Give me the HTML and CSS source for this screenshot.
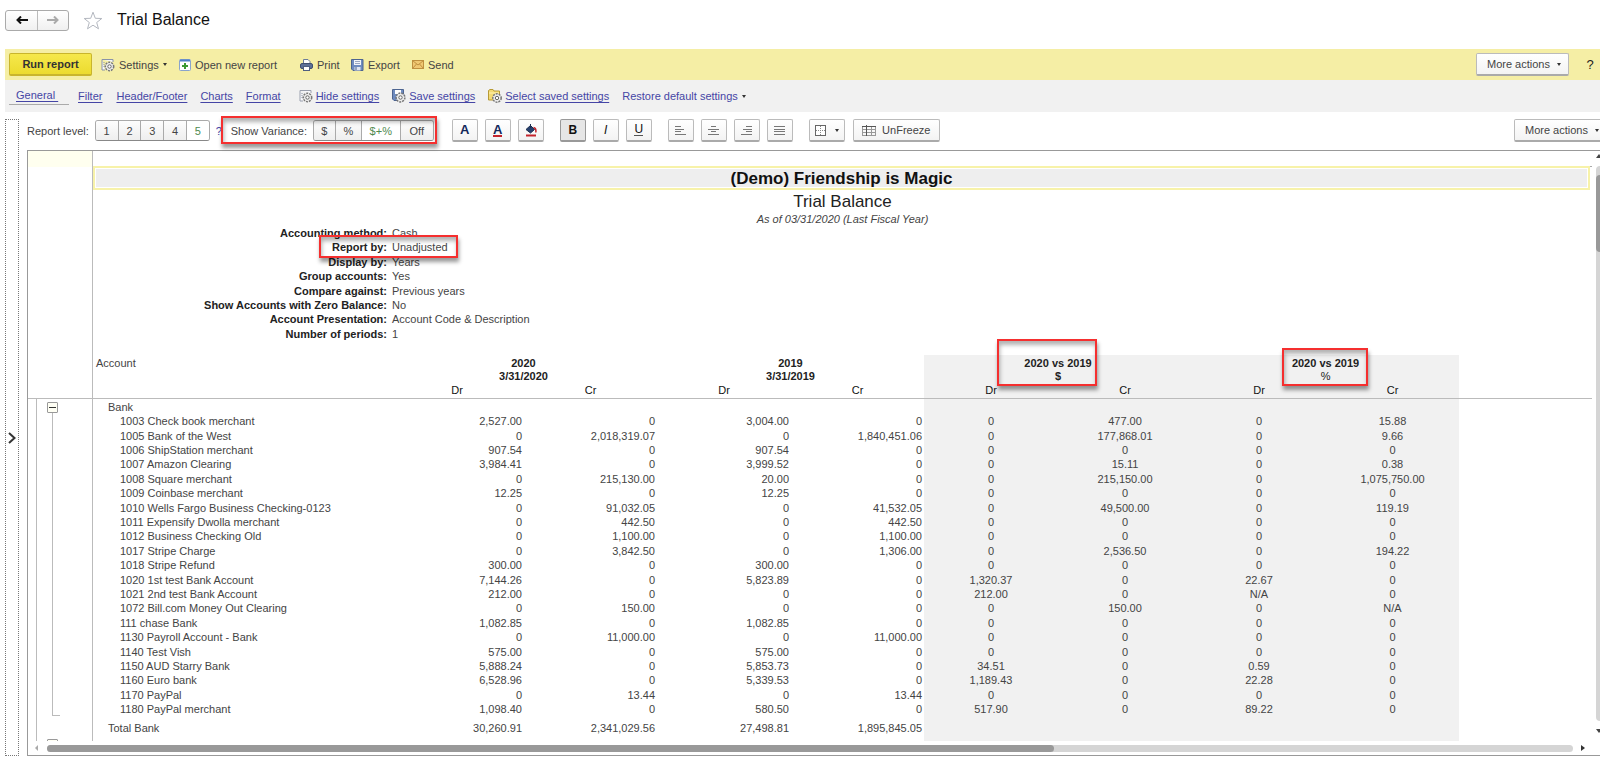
FILE: index.html
```html
<!DOCTYPE html>
<html lang="en">
<head>
<meta charset="utf-8">
<title>Trial Balance</title>
<link rel="stylesheet" href="styles.css">
</head>
<body>
<div class="app">
  <header class="titlebar">
    <div class="nav-group">
      <button class="nav-btn" aria-label="Back"><svg width="12" height="8" viewBox="0 0 12 8"><path d="M5 0.5 1.5 4 5 7.5M1.5 4H12" fill="none" stroke="#111" stroke-width="2"/></svg></button>
      <button class="nav-btn" aria-label="Forward"><svg width="12" height="8" viewBox="0 0 12 8"><path d="M7 0.5 10.500 4 7 7.5M10.500 4H0" fill="none" stroke="#aaa" stroke-width="2"/></svg></button>
    </div>
    <svg class="star" width="20" height="19" viewBox="0 0 20 19"><path d="M10 1.200 12.300 7.300 18.800 7.500 13.700 11.500 15.500 17.800 10 14.200 4.500 17.800 6.300 11.500 1.200 7.500 7.700 7.300Z" fill="#fff" stroke="#b4b8c0" stroke-width="1"/></svg>
    <h1 class="page-title">Trial Balance</h1>
  </header>

  <div class="command-bar">
    <button class="btn run-btn">Run report</button>
    <button class="cmd settings-cmd"><svg width="14" height="14" viewBox="0 0 14 14"><path d="M1 1.500H12V4M1 1.500V12H4" fill="#f4f6fb" stroke="#8a93a8"/><path d="M3 4V10" stroke="#8a93a8" stroke-dasharray="1 1"/><circle cx="8.500" cy="8.500" r="4.200" fill="#eee" stroke="#777" stroke-width="1.500" stroke-dasharray="2 1"/><circle cx="8.500" cy="8.500" r="1.700" fill="#fff" stroke="#666"/></svg>Settings<i class="caret"></i></button>
    <button class="cmd open-cmd"><svg width="13" height="12" viewBox="0 0 13 12"><rect x=".5" y=".5" width="11" height="11" rx="1" fill="#fff" stroke="#8aa4cc"/><path d="M1 1.500H11" stroke="#4f7fc7" stroke-width="2"/><path d="M6 4V10M3 7H9" stroke="#3c9a32" stroke-width="2"/></svg>Open new report</button>
    <button class="cmd print-cmd"><svg width="13" height="12" viewBox="0 0 13 12"><path d="M3.500 5V.5H8L10 2.500V5" fill="#fff" stroke="#6d7c98"/><rect x=".5" y="4.500" width="12" height="5" rx="1.500" fill="#5d7096" stroke="#3f4f70"/><rect x="3.500" y="7.500" width="6" height="4" fill="#fff" stroke="#4f5f80"/></svg>Print</button>
    <button class="cmd export-cmd"><svg width="13" height="12" viewBox="0 0 13 12"><path d="M.5 .5H12V11.500H2L.5 10Z" fill="#6f8cc0" stroke="#4d6490"/><rect x="3" y="1" width="7" height="5" fill="#f3f5fa"/><path d="M4 2.500H9M4 4.500H9" stroke="#9aa8c4"/><rect x="3.500" y="8" width="6" height="3.500" fill="#dfe5f0"/><path d="M5 8V11" stroke="#4d6490"/></svg>Export</button>
    <button class="cmd send-cmd"><svg width="12" height="9" viewBox="0 0 12 9"><rect x=".5" y=".5" width="11" height="8" fill="#f0c873" stroke="#bf9040"/><path d="M.5 .5 6 5 11.500 .5M.5 8.500 4.500 4M11.500 8.500 7.500 4" fill="none" stroke="#bf9040"/></svg>Send</button>
    <div class="spacer"></div>
    <button class="btn more-btn">More actions<i class="caret"></i></button>
    <button class="cmd help-cmd">?</button>
  </div>

  <nav class="tabs">
    <a class="tab active" href="#">General&nbsp;</a>
    <a class="tab filter-tab" href="#">Filter</a>
    <a class="tab header-tab" href="#">Header/Footer</a>
    <a class="tab" href="#">Charts</a>
    <a class="tab format-tab" href="#">Format</a>
    <a class="tab with-icon" href="#"><svg width="14" height="14" viewBox="0 0 14 14"><path d="M1 1.500H12V4M1 1.500V12H4" fill="#f8f8fb" stroke="#9aa0ae"/><path d="M3 4V10" stroke="#8a93a8" stroke-dasharray="1 1"/><circle cx="8.500" cy="8.500" r="4.200" fill="#eee" stroke="#777" stroke-width="1.500" stroke-dasharray="2 1"/><circle cx="8.500" cy="8.500" r="1.700" fill="#fff" stroke="#666"/></svg><span>Hide settings</span></a>
    <a class="tab with-icon" href="#"><svg width="14" height="14" viewBox="0 0 14 14"><path d="M.5 .5H11.500V11.500H2L.5 10Z" fill="#6f8cc0" stroke="#4d6490"/><rect x="3" y="1" width="6" height="4" fill="#fff"/><circle cx="8.500" cy="8.500" r="4.400" fill="#eee" stroke="#777" stroke-width="1.500" stroke-dasharray="2 1"/><circle cx="8.500" cy="8.500" r="1.700" fill="#fff" stroke="#666"/></svg><span>Save settings</span></a>
    <a class="tab with-icon" href="#"><svg width="14" height="14" viewBox="0 0 14 14"><path d="M.5 11V1.500L2 .5H5L6 2H11.500V11Z" fill="#f3da74" stroke="#b79a35"/><path d="M1 4H11" stroke="#fff3b5"/><circle cx="9" cy="9" r="4.200" fill="#eee" stroke="#777" stroke-width="1.500" stroke-dasharray="2 1"/><circle cx="9" cy="9" r="1.700" fill="#fff" stroke="#666"/></svg><span>Select saved settings</span></a>
    <a class="tab restore-tab" href="#">Restore default settings<i class="caret"></i></a>
  </nav>

  <div class="workspace">
    <button class="side-panel" aria-label="Expand panel"><svg width="8" height="12" viewBox="0 0 8 12"><path d="M1 1 6.500 6 1 11" fill="none" stroke="#333" stroke-width="2"/></svg></button>
    <div class="report">
      <div class="toolbar">
        <span class="tool-label">Report level:</span>
        <div class="segmented levels">
          <button>1</button><button>2</button><button>3</button><button>4</button><button class="on">5</button>
        </div>
        <a class="level-help" href="#">?</a>
        <div class="variance">
          <span class="tool-label">Show Variance:</span>
          <div class="segmented amounts">
            <button>$</button><button>%</button><button class="on">$+%</button><button>Off</button>
          </div>
          <span class="mark variance-mark"></span>
        </div>
        <div class="tool-group">
          <button class="btn tool" aria-label="Font"><b class="navy">A</b></button>
          <button class="btn tool" aria-label="Text color"><b class="navy redline">A</b></button>
          <button class="btn tool" aria-label="Fill color"><svg width="12" height="13" viewBox="0 0 12 13"><path d="M1 5.500 5.500 1.500 9.500 5.500 5.500 9Z" fill="#26406e" stroke="#1b2d50"/><path d="M5.500 4V0" stroke="#1b2d50"/><path d="M8.500 3.500Q11.500 4 10.800 8.500" fill="none" stroke="#c3242c" stroke-width="1.500"/><path d="M1 11.500H11" stroke="#c3242c" stroke-width="2"/></svg></button>
        </div>
        <div class="tool-group">
          <button class="btn tool pressed" aria-label="Bold"><b>B</b></button>
          <button class="btn tool" aria-label="Italic"><em>I</em></button>
          <button class="btn tool" aria-label="Underline"><span class="under">U</span></button>
        </div>
        <div class="tool-group">
          <button class="btn tool" aria-label="Align left"><svg width="11" height="9" viewBox="0 0 11 9"><path d="M0 .5H6M0 3.500H9M0 5.500H6M0 8.500H11" stroke="#777"/></svg></button>
          <button class="btn tool" aria-label="Align center"><svg width="11" height="9" viewBox="0 0 11 9"><path d="M3 .5H8M0 3.500H11M3 5.500H8M0 8.500H11" stroke="#777"/></svg></button>
          <button class="btn tool" aria-label="Align right"><svg width="11" height="9" viewBox="0 0 11 9"><path d="M5 .5H11M2 3.500H11M5 5.500H11M0 8.500H11" stroke="#777"/></svg></button>
          <button class="btn tool" aria-label="Justify"><svg width="11" height="9" viewBox="0 0 11 9"><path d="M0 .5H11M0 3.500H11M0 5.500H11M0 8.500H11" stroke="#777"/></svg></button>
        </div>
        <button class="btn borders" aria-label="Borders"><svg width="11" height="11" viewBox="0 0 11 11"><rect x=".5" y=".5" width="10" height="10" fill="#fff" stroke="#666"/><path d="M5.500 1V10M1 5.500H10" stroke="#888" stroke-dasharray="1 1"/></svg><i class="caret"></i></button>
        <button class="btn unfreeze"><svg width="14" height="11" viewBox="0 0 14 11"><path d="M0 1.500H14M0 4.500H14M0 7.500H14M0 10.500H14M.5 1V11M4.500 1V11M9.500 1V11M13.500 1V11" stroke="#999"/><path d="M0 1.500H14M4.500 0V11" stroke="#555"/></svg>UnFreeze</button>
        <div class="spacer"></div>
        <button class="btn more-btn clipped">More actions<i class="caret"></i></button>
      </div>

      <div class="sheet">
        <div class="gutter">
          <div class="gutter-corner"></div>
          <div class="gutter-head"></div>
          <div class="gutter-body">
            <div class="tree">
              <button class="fold" aria-label="Collapse Bank"></button>
              <div class="tree-line"></div>
              <button class="fold next" aria-label="Collapse next group"></button>
            </div>
          </div>
        </div>
        <div class="cells">
          <div class="top-row"></div>
          <h2 class="company">(Demo) Friendship is Magic</h2>
          <p class="report-name">Trial Balance</p>
          <p class="as-of">As of 03/31/2020 (Last Fiscal Year)</p>
          <dl class="params">
            <dt>Accounting method:</dt><dd>Cash</dd>
            <dt>Report by:</dt><dd class="marked">Unadjusted<span class="mark unadjusted-mark"></span></dd>
            <dt>Display by:</dt><dd>Years</dd>
            <dt>Group accounts:</dt><dd>Yes</dd>
            <dt>Compare against:</dt><dd>Previous years</dd>
            <dt>Show Accounts with Zero Balance:</dt><dd>No</dd>
            <dt>Account Presentation:</dt><dd>Account Code &amp; Description</dd>
            <dt>Number of periods:</dt><dd>1</dd>
          </dl>
          <table class="balances">
            <colgroup><col class="c-account"><col class="c-wide"><col class="c-narrow"><col class="c-wide"><col class="c-narrow"><col span="3" class="c-wide shade"><col class="c-narrow shade"><col></colgroup>
            <thead>
              <tr class="periods"><th class="account">Account</th><th colspan="2">2020<br>3/31/2020</th><th colspan="2">2019<br>3/31/2019</th><th colspan="2"><div class="marked">2020 vs 2019<br>$<span class="mark dollar-mark"></span></div></th><th colspan="2"><div class="marked">2020 vs 2019<br><span class="light">%</span><span class="mark percent-mark"></span></div></th><th></th></tr>
              <tr class="sides"><th></th><th>Dr</th><th>Cr</th><th>Dr</th><th>Cr</th><th>Dr</th><th>Cr</th><th>Dr</th><th>Cr</th><th></th></tr>
            </thead>
            <tbody>
              <tr class="group"><td>Bank</td><td></td><td></td><td></td><td></td><td></td><td></td><td></td><td></td></tr>
              <tr><td>1003 Check book merchant</td><td>2,527.00</td><td>0</td><td>3,004.00</td><td>0</td><td>0</td><td>477.00</td><td>0</td><td>15.88</td></tr>
              <tr><td>1005 Bank of the West</td><td>0</td><td>2,018,319.07</td><td>0</td><td>1,840,451.06</td><td>0</td><td>177,868.01</td><td>0</td><td>9.66</td></tr>
              <tr><td>1006 ShipStation merchant</td><td>907.54</td><td>0</td><td>907.54</td><td>0</td><td>0</td><td>0</td><td>0</td><td>0</td></tr>
              <tr><td>1007 Amazon Clearing</td><td>3,984.41</td><td>0</td><td>3,999.52</td><td>0</td><td>0</td><td>15.11</td><td>0</td><td>0.38</td></tr>
              <tr><td>1008 Square merchant</td><td>0</td><td>215,130.00</td><td>20.00</td><td>0</td><td>0</td><td>215,150.00</td><td>0</td><td>1,075,750.00</td></tr>
              <tr><td>1009 Coinbase merchant</td><td>12.25</td><td>0</td><td>12.25</td><td>0</td><td>0</td><td>0</td><td>0</td><td>0</td></tr>
              <tr><td>1010 Wells Fargo Business Checking-0123</td><td>0</td><td>91,032.05</td><td>0</td><td>41,532.05</td><td>0</td><td>49,500.00</td><td>0</td><td>119.19</td></tr>
              <tr><td>1011 Expensify Dwolla merchant</td><td>0</td><td>442.50</td><td>0</td><td>442.50</td><td>0</td><td>0</td><td>0</td><td>0</td></tr>
              <tr><td>1012 Business Checking Old</td><td>0</td><td>1,100.00</td><td>0</td><td>1,100.00</td><td>0</td><td>0</td><td>0</td><td>0</td></tr>
              <tr><td>1017 Stripe Charge</td><td>0</td><td>3,842.50</td><td>0</td><td>1,306.00</td><td>0</td><td>2,536.50</td><td>0</td><td>194.22</td></tr>
              <tr><td>1018 Stripe Refund</td><td>300.00</td><td>0</td><td>300.00</td><td>0</td><td>0</td><td>0</td><td>0</td><td>0</td></tr>
              <tr><td>1020 1st test Bank Account</td><td>7,144.26</td><td>0</td><td>5,823.89</td><td>0</td><td>1,320.37</td><td>0</td><td>22.67</td><td>0</td></tr>
              <tr><td>1021 2nd test Bank Account</td><td>212.00</td><td>0</td><td>0</td><td>0</td><td>212.00</td><td>0</td><td>N/A</td><td>0</td></tr>
              <tr><td>1072 Bill.com Money Out Clearing</td><td>0</td><td>150.00</td><td>0</td><td>0</td><td>0</td><td>150.00</td><td>0</td><td>N/A</td></tr>
              <tr><td>111 chase Bank</td><td>1,082.85</td><td>0</td><td>1,082.85</td><td>0</td><td>0</td><td>0</td><td>0</td><td>0</td></tr>
              <tr><td>1130 Payroll Account - Bank</td><td>0</td><td>11,000.00</td><td>0</td><td>11,000.00</td><td>0</td><td>0</td><td>0</td><td>0</td></tr>
              <tr><td>1140 Test Vish</td><td>575.00</td><td>0</td><td>575.00</td><td>0</td><td>0</td><td>0</td><td>0</td><td>0</td></tr>
              <tr><td>1150 AUD Starry Bank</td><td>5,888.24</td><td>0</td><td>5,853.73</td><td>0</td><td>34.51</td><td>0</td><td>0.59</td><td>0</td></tr>
              <tr><td>1160 Euro bank</td><td>6,528.96</td><td>0</td><td>5,339.53</td><td>0</td><td>1,189.43</td><td>0</td><td>22.28</td><td>0</td></tr>
              <tr><td>1170 PayPal</td><td>0</td><td>13.44</td><td>0</td><td>13.44</td><td>0</td><td>0</td><td>0</td><td>0</td></tr>
              <tr><td>1180 PayPal merchant</td><td>1,098.40</td><td>0</td><td>580.50</td><td>0</td><td>517.90</td><td>0</td><td>89.22</td><td>0</td></tr>
              <tr class="total"><td>Total Bank</td><td>30,260.91</td><td>2,341,029.56</td><td>27,498.81</td><td>1,895,845.05</td><td></td><td></td><td></td><td></td></tr>
            </tbody>
          </table>
        </div>
        <div class="vscroll">
          <i class="arrow up"></i>
          <div class="vtrack"><div class="vthumb"></div></div>
          <i class="arrow down"></i>
        </div>
        <div class="hscroll">
          <i class="arrow left"></i>
          <div class="htrack"><div class="hthumb"></div></div>
          <i class="arrow right"></i>
        </div>
      </div>
    </div>
  </div>
</div>
</body>
</html>
```
FILE: styles.css
```css
* { box-sizing: border-box; }
body {
  margin: 0;
  background: #fff;
  color: #444;
  font: 11px/14px "Liberation Sans", Arial, sans-serif;
  overflow: hidden;
}
button {
  font: inherit;
  color: inherit;
  padding: 0;
  margin: 0;
  border: 0;
  background: none;
}
h1, h2, p, dl, dd { margin: 0; }
svg { display: block; flex: none; }
.app {
  display: flex;
  flex-direction: column;
  height: 100vh;
  padding-left: 5px;
}
.spacer { flex: 1; }
.caret {
  width: 0;
  border: 2px solid transparent;
  border-top: 3px solid #333;
  border-bottom: 0;
}

/* Title bar */
.titlebar {
  display: flex;
  align-items: center;
  height: 49px;
  padding-bottom: 9px;
}
.nav-group {
  display: flex;
  height: 21px;
  border: 1px solid #aaa;
  border-radius: 3px;
  background: linear-gradient(#fff, #f0f0f0);
}
.nav-btn {
  display: flex;
  align-items: center;
  justify-content: center;
  width: 31px;
}
.nav-btn + .nav-btn { border-left: 1px solid #bbb; }
.star { margin: 0 14px 0 14px; }
.page-title {
  font-size: 16px;
  line-height: 20px;
  font-weight: normal;
  color: #111;
}

/* Command bar */
.btn {
  display: flex;
  align-items: center;
  justify-content: center;
  height: 23px;
  border: 1px solid #bbb;
  border-bottom: 2px solid #aaa;
  border-radius: 2px;
  background: linear-gradient(#fff, #f3f3f3);
}
.command-bar {
  display: flex;
  align-items: center;
  height: 31px;
  flex: none;
  padding-left: 4px;
  background: #f5eea5;
}
.run-btn {
  width: 83px;
  margin-right: 9px;
  border-color: #c9b52c;
  background: linear-gradient(#f6e84c, #ecdb2e);
  font-weight: bold;
  color: #333;
}
.cmd { display: flex; align-items: center; gap: 4px; }
.settings-cmd { width: 78px; }
.open-cmd { width: 121px; gap: 3px; }
.print-cmd { width: 51px; }
.export-cmd { width: 61px; }
.more-btn { gap: 7px; width: 93px; padding-left: 3px; }
.help-cmd {
  justify-content: center;
  width: 31px;
  padding-left: 11px;
  font-size: 13px;
  color: #222;
}

/* Settings tabs */
.tabs {
  display: flex;
  align-items: center;
  height: 32px;
  flex: none;
  padding-left: 4px;
  gap: 13px;
  background: #f1f1f1;
}
.tab { color: #4545a5; text-decoration: underline; text-underline-offset: 2px; }
.tab.active {
  width: 60px;
  margin-right: -4px;
  padding: 0 0 2px 7px;
  border-bottom: 1px solid #aaa;
}
.header-tab { margin-left: 1px; }
.format-tab { margin-right: 5px; }
.with-icon { display: flex; align-items: center; gap: 3px; text-decoration: none; }
.with-icon span { text-decoration: underline; }
.restore-tab { display: flex; align-items: center; gap: 4px; text-decoration: none; }

/* Workspace */
.workspace { display: flex; flex: 1; min-height: 0; }
.side-panel {
  display: flex;
  align-items: center;
  justify-content: center;
  width: 14px;
  flex: none;
  margin: 7px 8px 2px 0;
  border: 1px dotted #777;
}
.report { display: flex; flex-direction: column; flex: 1; min-width: 0; }
.toolbar {
  display: flex;
  align-items: center;
  height: 38px;
  flex: none;
  padding-bottom: 1px;
}
.tool-label { flex: none; }
.segmented {
  display: flex;
  height: 21px;
  border: 1px solid #aaa;
  border-bottom-color: #888;
  border-radius: 3px;
  overflow: hidden;
}
.segmented button {
  flex: 1 1 auto;
  background: linear-gradient(#fdfdfd, #eee);
}
.segmented button + button { border-left: 1px solid #aaa; }
.segmented .on { background: #fff; color: #4f8a4f; }
.levels { width: 115px; margin-left: 6px; }
.level-help { width: 16px; padding-left: 6px; color: #4545a5; text-decoration: none; }
.variance {
  position: relative;
  display: flex;
  align-items: center;
  justify-content: space-between;
  width: 203px;
  margin: 0 18px 0 5px;
}
.segmented.amounts { display: grid; grid-template-columns: 21fr 26fr 39fr 33fr; width: 121px; }
.tool-group { display: flex; gap: 7px; margin-right: 16px; }
.tool { width: 26px; color: #111; font-size: 12px; }
.pressed { background: #e6e6e6; border-color: #999; }
.navy { color: #14285a; font-size: 13px; }
.redline { line-height: 11px; border-bottom: 2px solid #c3242c; }
.under { line-height: 11px; border-bottom: 1px solid #555; }
.borders { width: 36px; gap: 9px; margin-right: 8px; }
.unfreeze { width: 87px; gap: 6px; }
.clipped { flex: none; margin-right: -7px; }

/* Red callout frames */
.marked { position: relative; }
.mark {
  position: absolute;
  border: 2px solid #f52f2f;
  box-shadow: 1px 4px 4px rgba(0, 0, 0, .4), inset 1px 4px 4px rgba(0, 0, 0, .3);
  pointer-events: none;
}
.variance-mark { inset: -4px -3px -3px -10px; }
.unadjusted-mark { top: -5px; left: -73px; width: 139px; height: 23px; }
.dollar-mark { top: -18px; left: 73px; width: 100px; height: 47px; }
.percent-mark { top: -9px; left: 90px; width: 86px; height: 38px; }

/* Sheet */
.sheet {
  flex: 1;
  min-height: 0;
  display: grid;
  grid-template-columns: 65px minmax(0, 1fr) 8px;
  grid-template-rows: minmax(0, 1fr) 14px;
  margin-bottom: 2px;
  border: 1px solid #999;
  border-right: 0;
}
.gutter {
  display: flex;
  flex-direction: column;
  border-right: 1px solid #bbb;
  overflow: hidden;
}
.gutter-corner { height: 16px; flex: none; background: #ffffef; }
.gutter-head { height: 232px; flex: none; border-bottom: 1px solid #bbb; }
.gutter-body { flex: 1; padding-left: 8px; }
.tree {
  display: flex;
  flex-direction: column;
  padding: 3px 0 0 10px;
  border-left: 1px solid #bbb;
  height: 100%;
}
.fold {
  width: 11px;
  height: 11px;
  flex: none;
  border: 1px solid #999;
  border-radius: 1px;
  background: linear-gradient(#333, #333) center / 7px 1px no-repeat #fffff4;
}
.tree-line {
  width: 8px;
  height: 303px;
  flex: none;
  margin: 0 0 23px 5px;
  border: solid #bbb;
  border-width: 0 0 1px 1px;
}
.cells { overflow: hidden; text-align: center; }
.top-row { height: 16px; border-bottom: 1px solid #aaa; }
.company {
  height: 24px;
  margin: -1px 2px 1px 0;
  padding-top: 1px;
  border: 2px solid #f7f2a9;
  outline: 1px solid #fff;
  outline-offset: -3px;
  background: #eee;
  font-size: 17px;
  line-height: 20px;
  color: #111;
}
.report-name { font-size: 17px; line-height: 22px; color: #222; }
.as-of { font-style: italic; line-height: 13px; }
.params {
  display: grid;
  grid-template-columns: 294px 1fr;
  grid-auto-rows: 1fr;
  column-gap: 5px;
  height: 115px;
  margin-bottom: 14px;
  text-align: left;
}
.params dt { text-align: right; font-weight: bold; color: #222; }
.balances {
  width: 100%;
  table-layout: fixed;
  border-spacing: 0;
  white-space: nowrap;
}
.c-account { width: 297px; }
.c-wide { width: 134px; }
.c-narrow { width: 133px; }
.shade { background: #f1f1f1; }
.balances th { padding: 0; color: #222; vertical-align: top; line-height: 13px; }
.balances .account { padding-left: 3px; text-align: left; font-weight: normal; color: #444; }
.balances .light { font-weight: normal; }
.balances .periods th { height: 29px; padding-top: 2px; }
.balances .sides th { height: 15px; border-bottom: 1px solid #bbb; font-weight: normal; color: #111; }
.balances td { height: 14px; padding: 0 2px 0 0; text-align: right; line-height: 14px; }
.balances tr:nth-child(5n + 1) td, .balances tr:nth-child(5n + 3) td { height: 15px; }
.balances td:nth-child(n + 6) { padding: 0; text-align: center; }
.balances td:first-child { padding-left: 27px; text-align: left; }
.balances .group td:first-child, .balances .total td:first-child { padding-left: 15px; }
.balances tr.total td { height: 40px; padding-top: 5px; vertical-align: top; }

/* Scroll bars */
.vscroll { display: flex; flex-direction: column; padding-left: 4px; overflow: hidden; }
.vtrack { flex: 1; width: 9px; margin: 8px 0; border-radius: 4px; background: #d5d5d5; padding-top: 9px; }
.vthumb { height: 77px; border-radius: 4px; background: #999; }
.hscroll { grid-column: 1 / 4; display: flex; align-items: center; padding: 0 15px 0 7px; }
.htrack { flex: 1; height: 7px; margin: 0 8px 0 9px; border-radius: 4px; background: #d5d5d5; }
.hthumb { width: 66%; height: 7px; border-radius: 4px; background: #999; }
.arrow { width: 0; flex: none; border: 3px solid transparent; }
.up { margin-top: 3px; border-bottom: 4px solid #444; border-top: 0; }
.down { margin-bottom: 8px; border-top: 4px solid #444; border-bottom: 0; }
.left { border-right: 3px solid #aaa; border-left: 0; }
.right { border-left: 4px solid #333; border-right: 0; }
```
